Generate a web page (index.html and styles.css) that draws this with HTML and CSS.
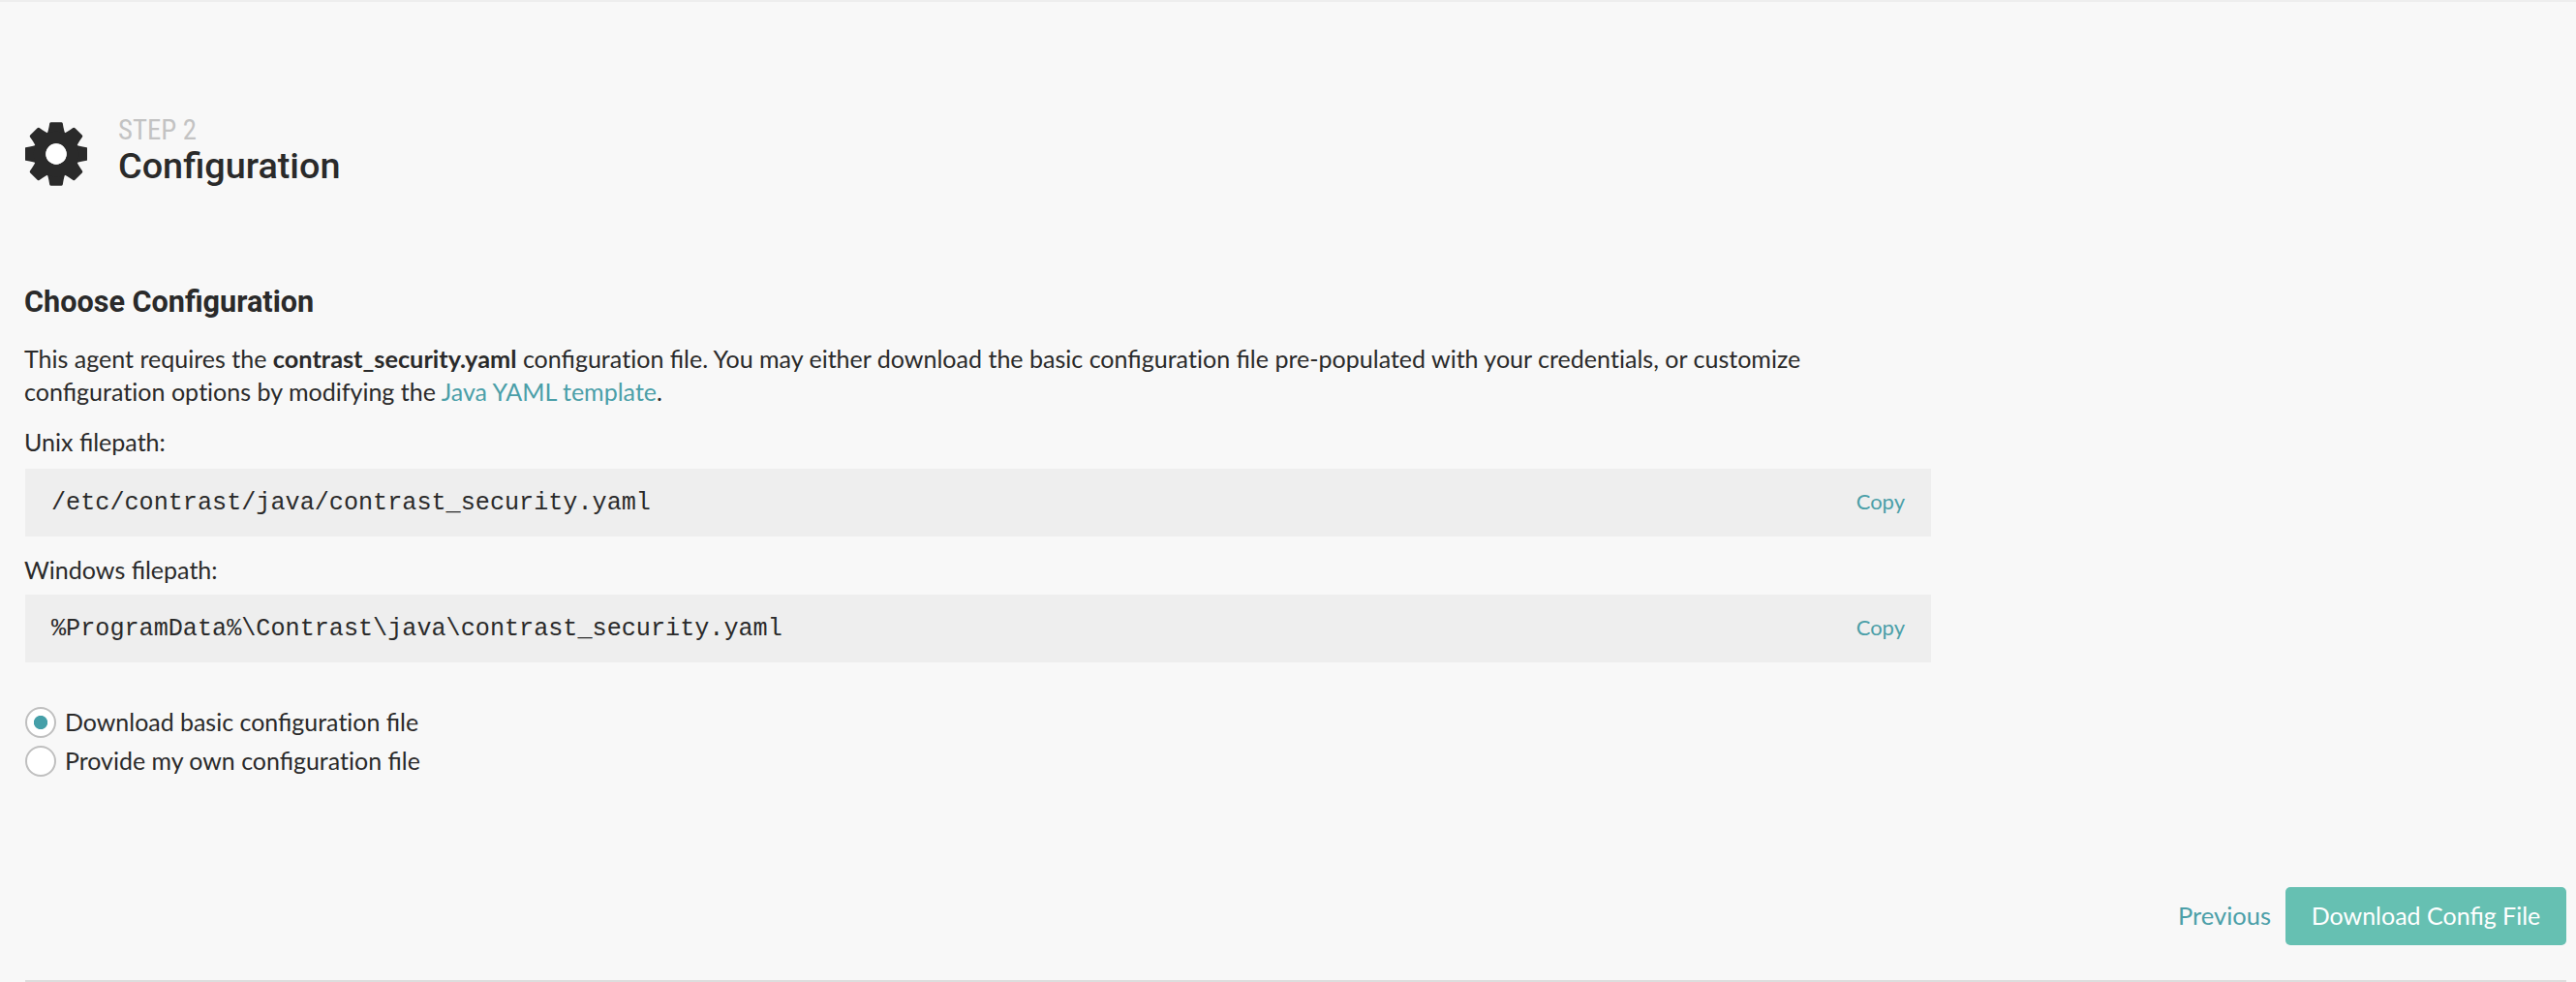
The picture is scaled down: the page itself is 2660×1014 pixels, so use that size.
FILE: index.html
```html
<!DOCTYPE html>
<html lang="en">
<head>
<meta charset="utf-8">
<title>Configuration</title>
<link rel="stylesheet" href="styles.css">
</head>
<body>
<main class="wizard">
  <header class="step">
    <svg class="step-icon" viewBox="-32 -33 64 66" aria-hidden="true">
      <defs><path id="tooth" d="M-10.500-18Q-8-23-6.800-31.400Q-6.500-32.700-5.200-32.700H5.200Q6.500-32.700 6.800-31.400Q8-23 10.500-18Z"/></defs>
      <use href="#tooth"/>
      <use href="#tooth" transform="rotate(45)"/>
      <use href="#tooth" transform="rotate(90)"/>
      <use href="#tooth" transform="rotate(135)"/>
      <use href="#tooth" transform="rotate(180)"/>
      <use href="#tooth" transform="rotate(225)"/>
      <use href="#tooth" transform="rotate(270)"/>
      <use href="#tooth" transform="rotate(315)"/>
      <circle r="17" fill="none" stroke="currentColor" stroke-width="12.600"/>
      <circle class="hub" r="10.700"/>
    </svg>
    <div>
      <div class="step-label">STEP 2</div>
      <h1 class="step-title">Configuration</h1>
    </div>
  </header>

  <section class="content">
    <h2 class="heading">Choose Configuration</h2>
    <p class="intro">This agent requires the <strong>contrast_security.yaml</strong> configura<span class="no-liga">ti</span>on file. You may either download the basic configura<span class="no-liga">ti</span>on file pre-populated with your creden<span class="no-liga">ti</span>als, or customize<br><span class="line-two">configura<span class="no-liga">ti</span>on op<span class="no-liga">ti</span>ons by modifying the <a class="link" href="#">Java YAML template</a>.</span></p>
    <p class="path-label">Unix filepath:</p>
    <div class="code-row"><code class="code">/etc/contrast/java/contrast_security.yaml</code><a class="copy" href="#">Copy</a></div>
    <p class="path-label windows">Windows filepath:</p>
    <div class="code-row"><code class="code">%ProgramData%\Contrast\java\contrast_security.yaml</code><a class="copy" href="#">Copy</a></div>
    <div class="options">
      <label class="option"><input class="radio" type="radio" name="source" checked><span class="option-text">Download basic configura<span class="no-liga">ti</span>on file</span></label>
      <label class="option"><input class="radio" type="radio" name="source"><span class="option-text">Provide my own configura<span class="no-liga">ti</span>on file</span></label>
    </div>
  </section>

  <footer class="actions">
    <a class="previous" href="#">Previous</a>
    <button class="download" type="button">Download Config File</button>
  </footer>
</main>
</body>
</html>
```
FILE: styles.css
```css
* { box-sizing: border-box; }

body {
  margin: 0;
  background: #f8f8f8;
  color: #2a2a2a;
  font: 25.040px/34px Lato, sans-serif;
}

h1, h2, p { margin: 0; }

a { color: #4b9fa8; text-decoration: none; }

.no-liga { font-variant-ligatures: none; }

.wizard {
  display: flex;
  flex-direction: column;
  height: 1014px;
  padding: 116px 10px 0 26px;
  border-top: 2px solid #eee;
}

.step { display: flex; height: 80px; gap: 32px; }

.step-icon {
  width: 64px;
  height: 66px;
  margin-top: 8px;
  fill: currentColor;
  color: #2a2a2a;
}

.step-icon .hub { fill: #fff; }

.step-label {
  font: 28.800px/32px "Roboto Condensed", Roboto, sans-serif;
  color: #c3c3c3;
}

.step-title { font: 500 37.800px/43px Roboto, sans-serif; }

.content { width: 1968px; margin-top: 94px; }

.heading { margin-left: -1px; font: 700 30.600px/40px Roboto, sans-serif; }

.intro { margin: 21px 0 0 -1px; white-space: nowrap; }

.intro strong { font-size: 25.300px; line-height: 1; }

.path-label { margin: 18px 0 0 -1px; }

.code-row {
  display: flex;
  align-items: center;
  justify-content: space-between;
  height: 70px;
  margin-top: 11px;
  padding: 0 27px;
  background: #eee;
}

.code {
  padding-top: 2px;
  font: 25.160px/34px Courier, "Liberation Mono", monospace;
}

.copy { padding-bottom: 2px; font-size: 22px; }

.path-label.windows { margin-top: 17px; }

.path-label.windows + .code-row { margin-top: 9px; }

.options { margin-top: 42px; }

.option { display: flex; align-items: center; gap: 9px; height: 40px; }

.option-text { padding-bottom: 3px; font-size: 24.950px; }

.radio {
  appearance: none;
  width: 32px;
  height: 32px;
  margin: 0;
  border: 2px solid #bfbfbf;
  border-radius: 50%;
  background: #fff;
}

.radio:checked { background: radial-gradient(circle, #459fa8 6.700px, #fff 7.500px); }

.actions {
  display: flex;
  align-items: center;
  justify-content: flex-end;
  gap: 15px;
  height: 98px;
  margin-top: auto;
  padding-bottom: 36px;
  border-bottom: 2px solid #ddd;
}

.previous { padding-bottom: 3px; font-size: 25.500px; }

.download {
  width: 290px;
  height: 60px;
  padding: 0 0 3px;
  border: 0;
  border-radius: 5px;
  background: #66c0b2;
  color: #fff;
  font: 25px/34px Lato, sans-serif;
}
```
